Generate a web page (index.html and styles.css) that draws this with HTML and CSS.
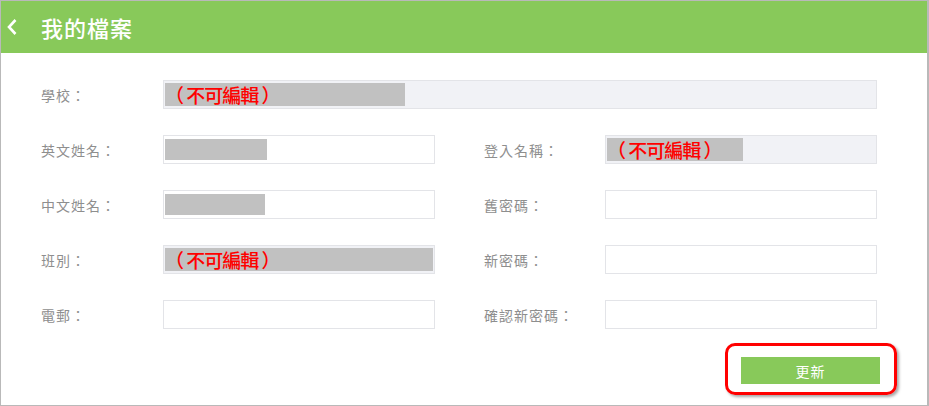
FILE: index.html
```html
<!DOCTYPE html>
<html lang="zh-Hant">
  <head>
    <meta charset="UTF-8" />
    <meta name="viewport" content="width=device-width, initial-scale=1.0" />
    <title>我的檔案</title>
    <link rel="stylesheet" href="styles.css">
  </head>
  <body>
    <div class="frame">
      <div class="topbar">
        <svg class="back" width="12" height="20" viewBox="0 0 12 20">
          <path d="M9.5 3 L3 10 L9.5 17" fill="none" stroke="#fff" stroke-width="2.6" />
        </svg>
        <h1>我的檔案</h1>
      </div>
      <form class="profile">
        <label>學校：</label>
        <div class="field locked wide"><span class="mask m-school">（ 不可編輯 ）</span></div>

        <label>英文姓名：</label>
        <div class="field"><span class="mask m-en"></span></div>
        <span></span>
        <label>登入名稱：</label>
        <div class="field locked"><span class="mask m-login">（ 不可編輯 ）</span></div>

        <label>中文姓名：</label>
        <div class="field"><span class="mask m-zh"></span></div>
        <span></span>
        <label>舊密碼：</label>
        <div class="field"></div>

        <label>班別：</label>
        <div class="field locked"><span class="mask m-class">（ 不可編輯 ）</span></div>
        <span></span>
        <label>新密碼：</label>
        <div class="field"></div>

        <label>電郵：</label>
        <div class="field"></div>
        <span></span>
        <label>確認新密碼：</label>
        <div class="field"></div>
      </form>
      <div class="actions">
        <span class="highlight">
          <button type="button">更新</button>
        </span>
      </div>
    </div>
  </body>
</html>
```

FILE: styles.css
```css
body {
  margin: 0;
  font-family: "Noto Sans CJK TC", "Noto Sans", sans-serif;
  background: #fff;
}
.frame {
  height: 404px;
  border: 1px solid #b9b9b9;
  border-right-width: 2px;
}
.topbar {
  height: 52px;
  background: #88c95a;
  display: flex;
  align-items: center;
  padding-left: 5px;
}
.back {
  margin-right: 23px;
}
.topbar h1 {
  margin: 0;
  color: #fff;
  font-size: 22px;
  font-weight: 500;
  letter-spacing: 1px;
}
.profile {
  display: grid;
  grid-template-columns: 122px 272px 49px 121px 272px;
  grid-auto-rows: 29px;
  row-gap: 26px;
  padding: 27px 0 0 40px;
}
.profile label {
  align-self: center;
  font-size: 14px;
  color: #8e8e8e;
  letter-spacing: 1px;
}
.field {
  box-sizing: border-box;
  border: 1px solid #e3e4e8;
  background: #fff;
  padding: 2px 1px;
  display: flex;
}
.field.locked {
  background: #f1f2f6;
}
.field.wide {
  grid-column: 2 / 6;
}
.mask {
  display: flex;
  align-items: center;
  background: #c1c1c1;
  color: #ff0000;
  font-size: 19px;
  line-height: 1;
  font-weight: 500;
  letter-spacing: -1px;
  white-space: pre;
}
.m-school { width: 240px; }
.m-login { width: 136px; }
.m-class { flex: 1; }
.m-en { width: 102px; margin: 1px 0; }
.m-zh { width: 100px; margin: 1px 0; }
.actions {
  display: flex;
  justify-content: flex-end;
  padding: 28px 47px 0 0;
}
.highlight {
  position: relative;
  display: inline-block;
}
.highlight::after {
  content: "";
  position: absolute;
  top: -14px;
  left: -16px;
  right: -17px;
  bottom: -11px;
  border: 3px solid #ff0000;
  border-radius: 10px;
  box-shadow: 2px 2px 3px rgba(0, 0, 0, 0.35);
  pointer-events: none;
}
button {
  display: block;
  width: 139px;
  height: 27px;
  border: none;
  background: #88c95a;
  color: #fff;
  font-family: inherit;
  font-size: 14px;
  letter-spacing: 1px;
}
```
